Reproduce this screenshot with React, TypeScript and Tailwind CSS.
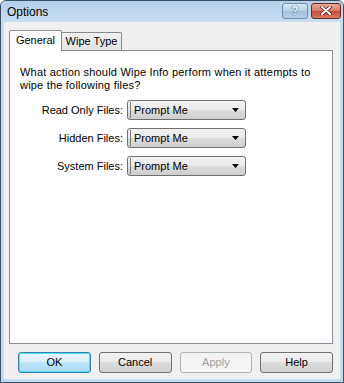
import React from "react";

const font = { fontFamily: '"Liberation Sans", Arial, sans-serif' };

function Combo() {
    return (
        <div className="flex items-center w-[119px] h-[20px] rounded-[3px] border border-[#707070] bg-[linear-gradient(#f2f2f2_0%,#ebebeb_50%,#dddddd_50%,#cfcfcf_100%)]">
            <div className="ml-[2px] h-[16px] w-[95px] pl-[3px] flex items-center text-[11px] text-black border-l border-[#7a7a7a]">Prompt Me</div>
            <div className="flex-1 flex justify-center">
                <svg width="7" height="4" viewBox="0 0 7 4">
                    <path d="M0 0 H7 L3.5 4 Z" fill="#000" />
                </svg>
            </div>
        </div>
    );
}

function Btn({ label, primary, disabled }: { label: string; primary?: boolean; disabled?: boolean }) {
    const cls = disabled
        ? "border-[#adb2b5] bg-[#f4f4f4] text-[#a0a0a0]"
        : primary
            ? "border-[#3c7fb1] text-black bg-[linear-gradient(#eaf6fd_0%,#d9f0fc_50%,#bee6fd_50%,#a7d9f5_100%)] shadow-[inset_0_0_0_1px_#48e1f8]"
            : "border-[#707070] text-black bg-[linear-gradient(#f2f2f2_0%,#ebebeb_50%,#dddddd_50%,#cfcfcf_100%)]";
    return (
        <div className={"w-[73px] h-[21px] rounded-[3px] border flex items-center justify-center text-[11px] " + cls}>
            {label}
        </div>
    );
}

export default function App() {
    return (
        <div style={font} className="w-[344px] h-[383px] flex flex-col border border-[#3b4e62] rounded-t-[6px] bg-[#c4dbf0] overflow-hidden">
            {/* title bar */}
            <div className="h-[21px] flex items-center bg-[linear-gradient(#b4cfe9,#c9ddf1)] pl-[6px] pr-[2px]">
                <span className="text-[12px] text-black flex-1 pt-[1px]">Options</span>
                <div className="flex gap-[3px] pb-[2px]">
                    <div className="w-[26px] h-[16px] rounded-[3px] border border-[#6d8aa6] bg-[linear-gradient(#d9e8f5_0%,#b9d0e6_50%,#a2bfdc_50%,#b8cfe6_100%)] flex items-center justify-center">
                        <span className="text-[12px] font-bold text-white leading-none [text-shadow:0_0_1px_#20374f,0_0_1px_#20374f]">?</span>
                    </div>
                    <div className="w-[30px] h-[16px] rounded-[3px] border border-[#6b2b22] bg-[linear-gradient(#e9a99a_0%,#d77966_50%,#c24e33_50%,#d47a62_100%)] flex items-center justify-center">
                        <svg width="12" height="9" viewBox="0 0 12 9">
                            <path d="M2 1 L10 8 M10 1 L2 8" stroke="#4a1a10" strokeWidth="3.4" strokeLinecap="round" />
                            <path d="M2 1 L10 8 M10 1 L2 8" stroke="#fff" strokeWidth="2" strokeLinecap="round" />
                        </svg>
                    </div>
                </div>
            </div>
            {/* client */}
            <div className="flex-1 mx-[3px] mb-[3px] bg-[#f0f0f0] flex flex-col pl-[5px] pr-[7px] pt-[8px]">
                <div className="flex items-end h-[20px]">
                    <div className="relative z-10 h-[21px] -mb-[1px] w-[53px] border border-b-0 border-[#898c95] rounded-t-[2px] bg-white flex items-center justify-center text-[11px] pb-[2px]">
                        General
                    </div>
                    <div className="h-[18px] w-[60px] border border-l-0 border-b-0 border-[#898c95] rounded-tr-[2px] bg-[linear-gradient(#f2f2f2,#e3e3e3)] flex items-center justify-center text-[11px]">
                        Wipe Type
                    </div>
                </div>
                <div className="h-[294px] border border-[#898c95] bg-white pl-[10px] pt-[15px] text-[11px] text-black">
                    <p className="leading-[13px] w-[296px] tracking-[0.2px]">
                        What action should Wipe Info perform when it attempts to wipe the following files?
                    </p>
                    <div className="mt-[8px] flex flex-col gap-[8px]">
                        {["Read Only Files:", "Hidden Files:", "System Files:"].map((l) => (
                            <div key={l} className="flex items-center">
                                <span className="w-[107px] text-right pr-[4px]">{l}</span>
                                <Combo />
                            </div>
                        ))}
                    </div>
                </div>
                <div className="flex gap-[8px] pl-[9px] mt-[8px]">
                    <Btn label="OK" primary />
                    <Btn label="Cancel" />
                    <Btn label="Apply" disabled />
                    <Btn label="Help" />
                </div>
            </div>
        </div>
    );
}
